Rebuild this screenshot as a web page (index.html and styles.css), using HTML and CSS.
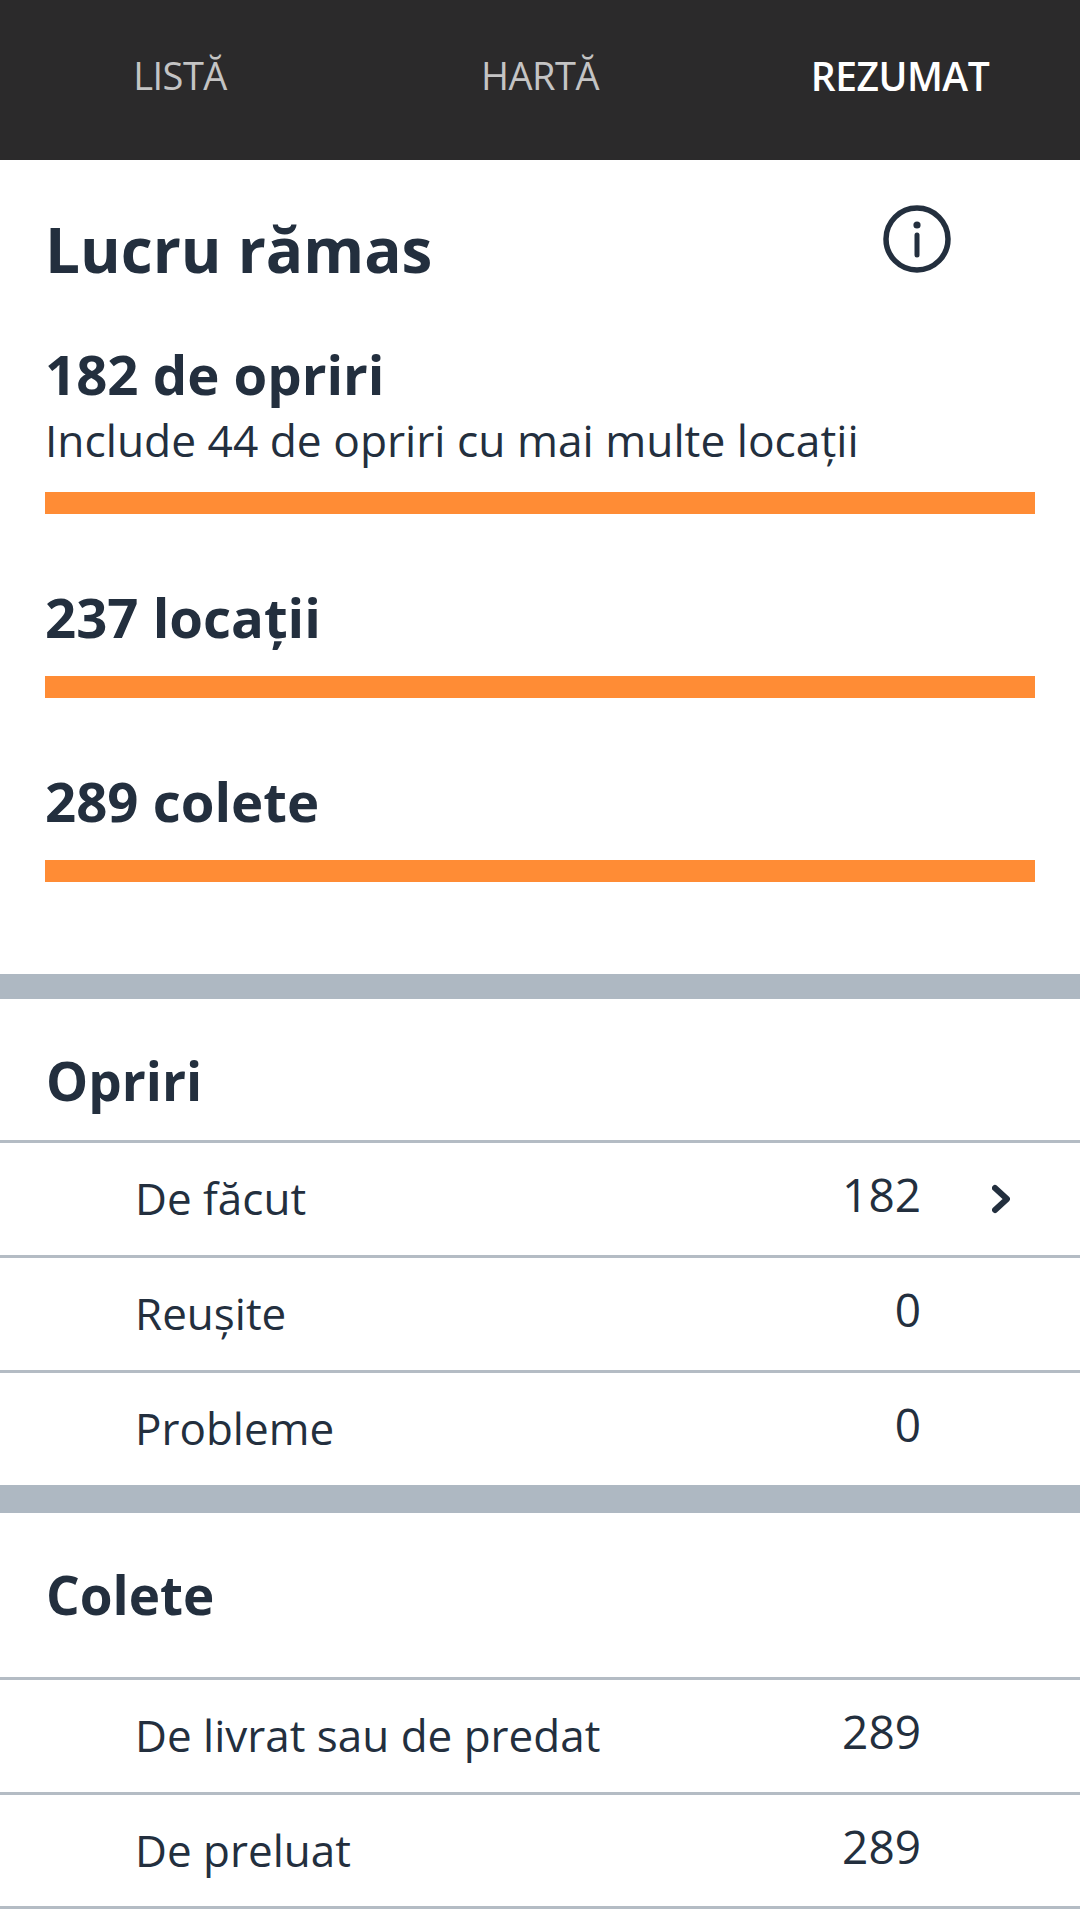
FILE: index.html
```html
<!DOCTYPE html>
<html lang="ro">
<head>
    <meta charset="UTF-8">
    <title>Rezumat</title>
    <link rel="stylesheet" href="styles.css">
</head>
<body>
    <nav class="tabs">
        <span class="tab">LISTĂ</span>
        <span class="tab">HARTĂ</span>
        <span class="tab active">REZUMAT</span>
    </nav>

    <section class="summary">
        <div class="title-row">
            <h1>Lucru rămas</h1>
            <svg class="info-icon" width="68" height="68" viewBox="0 0 68 68">
                <circle cx="34" cy="34" r="31" fill="none" stroke="#232f3e" stroke-width="5.5"/>
                <circle cx="34" cy="20" r="3.6" fill="#232f3e"/>
                <path d="M34 30v20" fill="none" stroke="#232f3e" stroke-width="5" stroke-linecap="round"/>
            </svg>
        </div>

        <div class="stat first">
            <h2>182 de opriri</h2>
            <p>Include 44 de opriri cu mai multe locații</p>
            <div class="bar"></div>
        </div>
        <div class="stat">
            <h2>237 locații</h2>
            <div class="bar"></div>
        </div>
        <div class="stat">
            <h2>289 colete</h2>
            <div class="bar"></div>
        </div>
    </section>

    <section class="group">
        <h3 class="group-title short">Opriri</h3>
        <div class="row">
            <span class="label">De făcut</span>
            <span class="count">182</span>
            <svg class="chevron" width="18" height="30" viewBox="0 0 18 30">
                <path d="M3 4l12 11L3 26" fill="none" stroke="#232f3e" stroke-width="6" stroke-linecap="round" stroke-linejoin="round"/>
            </svg>
        </div>
        <div class="row">
            <span class="label">Reușite</span>
            <span class="count">0</span>
        </div>
        <div class="row">
            <span class="label">Probleme</span>
            <span class="count">0</span>
        </div>
    </section>

    <section class="group thick">
        <h3 class="group-title">Colete</h3>
        <div class="row">
            <span class="label">De livrat sau de predat</span>
            <span class="count">289</span>
        </div>
        <div class="row last">
            <span class="label">De preluat</span>
            <span class="count">289</span>
        </div>
    </section>
</body>
</html>
```

FILE: styles.css
```css
body {
    margin: 0;
    background: #fff;
    color: #232f3e;
    font-family: "Open Sans", "Noto Sans", sans-serif;
    height: 1920px;
    overflow: hidden;
}

/* top tabs */
.tabs {
    display: grid;
    grid-template-columns: repeat(3, 1fr);
    align-items: center;
    height: 160px;
    padding-bottom: 10px;
    box-sizing: border-box;
    background: #2b2a2b;
}

.tab {
    text-align: center;
    color: #c4c4c4;
    font-size: 38px;
    letter-spacing: -0.5px;
}

.tab.active {
    color: #fff;
    font-size: 39px;
    font-weight: 600;
}

/* remaining work */
.summary {
    height: 814px;
    padding: 56px 45px 0;
    box-sizing: border-box;
}

.title-row {
    display: flex;
    justify-content: space-between;
    height: 70px;
}

h1 {
    margin: -2px 0 0;
    font-size: 62px;
    line-height: 70px;
    font-weight: 700;
}

.info-icon {
    margin: -11px 84px 0 0;
}

.stat {
    margin-top: 68px;
}

.stat.first {
    margin-top: 53px;
}

.stat h2 {
    margin: 0;
    font-size: 54.5px;
    line-height: 70px;
    font-weight: 700;
}

.stat p {
    margin: 5px 0 -1px;
    font-size: 44.3px;
    line-height: 52px;
}

.bar {
    height: 22px;
    margin-top: 24px;
    background: #ff8c35;
}

.stat.first .bar {
    margin-top: 27px;
}

/* lists */
.group {
    border-top: 25px solid #aeb8c2;
}

.group.thick {
    border-top-width: 28px;
}

.group-title {
    display: flex;
    align-items: center;
    height: 164px;
    margin: 0;
    padding: 0 0 2px 46px;
    box-sizing: border-box;
    font-size: 53px;
    font-weight: 700;
}

.group-title.short {
    height: 141px;
    padding: 21px 0 0 46px;
}

.row {
    display: grid;
    grid-template-columns: 1fr auto 89px;
    align-items: center;
    height: 115px;
    padding: 0 70px 0 135px;
    border-top: 3px solid #b4bcc4;
    box-sizing: border-box;
}

.row.last {
    border-bottom: 3px solid #b4bcc4;
    height: 117px;
}

.label {
    font-size: 44px;
    margin-bottom: 2px;
}

.count {
    font-size: 46px;
    margin-bottom: 10px;
}

.chevron {
    justify-self: end;
}
```
